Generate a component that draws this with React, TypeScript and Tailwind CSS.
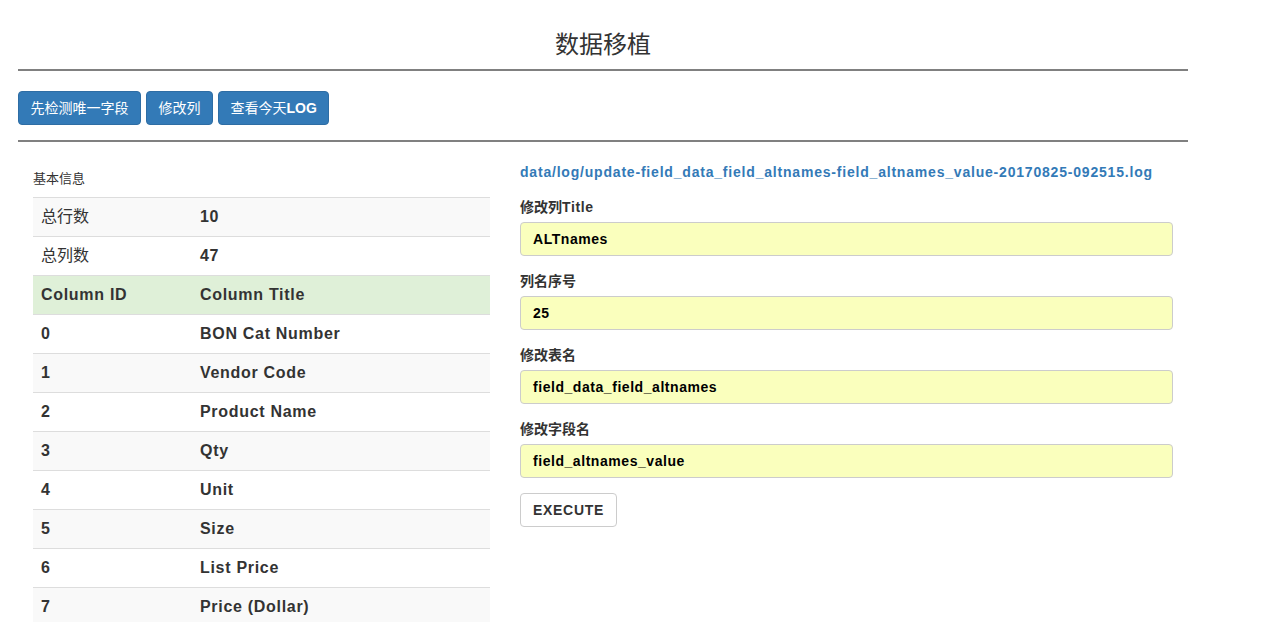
const font = {
  fontFamily: '"Liberation Sans", "Noto Sans CJK SC", Arial, sans-serif',
};

type Row = { id: string; title: string };

const columns: Row[] = [
  { id: "0", title: "BON Cat Number" },
  { id: "1", title: "Vendor Code" },
  { id: "2", title: "Product Name" },
  { id: "3", title: "Qty" },
  { id: "4", title: "Unit" },
  { id: "5", title: "Size" },
  { id: "6", title: "List Price" },
  { id: "7", title: "Price (Dollar)" },
];

const fields = [
  { label: "修改列", labelEn: "Title", value: "ALTnames" },
  { label: "列名序号", labelEn: "", value: "25" },
  { label: "修改表名", labelEn: "", value: "field_data_field_altnames" },
  { label: "修改字段名", labelEn: "", value: "field_altnames_value" },
];

export default function App() {
  return (
    <div
      className="h-[622px] w-[1266px] overflow-hidden bg-white text-[14px] text-[#333]"
      style={font}
    >
      <div className="ml-[18px] w-[1170px]">
        {/* Title */}
        <h1 className="mb-[7px] pt-[28px] text-center text-[24px] leading-[34px] text-[#333]">
          数据移植
        </h1>
        <div className="border-t-2 border-[#808080]" />

        {/* Toolbar */}
        <div className="mt-[20px] flex gap-[5px]">
          <button className="h-[34px] rounded-[4px] border border-[#2e6da4] bg-[#337ab7] px-[11.5px] text-[14px] text-white">
            先检测唯一字段
          </button>
          <button className="h-[34px] rounded-[4px] border border-[#2e6da4] bg-[#337ab7] px-[11.5px] text-[14px] text-white">
            修改列
          </button>
          <button className="h-[34px] rounded-[4px] border border-[#2e6da4] bg-[#337ab7] px-[11.5px] text-[14px] text-white">
            查看今天<span className="font-bold">LOG</span>
          </button>
        </div>
        <div className="mt-[15px] border-t-2 border-[#808080]" />

        <div className="flex">
          {/* Basic info table */}
          <div className="w-[487px] px-[15px] pt-[19px]">
            <div className="py-[8px] text-[13px] leading-[20px] text-[#333]">
              基本信息
            </div>
            <div className="w-[457px]">
              <div className="flex h-[39px] items-center border-t border-[#ddd] bg-[#f9f9f9] text-[16px]">
                <div className="w-[159px] px-[8px]">总行数</div>
                <div className="px-[8px] font-bold tracking-[0.7px]">10</div>
              </div>
              <div className="flex h-[39px] items-center border-t border-[#ddd] bg-white text-[16px]">
                <div className="w-[159px] px-[8px]">总列数</div>
                <div className="px-[8px] font-bold tracking-[0.7px]">47</div>
              </div>
              <div className="flex h-[39px] items-center border-t border-[#ddd] bg-[#dff0d8] text-[16px] font-bold tracking-[0.7px]">
                <div className="w-[159px] px-[8px]">Column ID</div>
                <div className="px-[8px]">Column Title</div>
              </div>
              {columns.map((row, i) => (
                <div
                  key={row.id}
                  className={`flex h-[39px] items-center border-t border-[#ddd] text-[16px] font-bold tracking-[0.7px] ${
                    i % 2 === 1 ? "bg-[#f9f9f9]" : "bg-white"
                  }`}
                >
                  <div className="w-[159px] px-[8px]">{row.id}</div>
                  <div className="px-[8px]">{row.title}</div>
                </div>
              ))}
            </div>
          </div>

          {/* Edit form */}
          <div className="w-[683px] px-[15px] pt-[20px]">
            <a className="block text-[14px] font-bold leading-[20px] tracking-[0.8px] text-[#337ab7]">
              data/log/update-field_data_field_altnames-field_altnames_value-20170825-092515.log
            </a>
            {fields.map((f) => (
              <div key={f.label} className="mt-[15px]">
                <div className="mb-[5px] text-[14px] font-bold leading-[20px]">
                  {f.label}
                  {f.labelEn && (
                    <span className="tracking-[0.6px]">{f.labelEn}</span>
                  )}
                </div>
                <div className="flex h-[34px] items-center rounded-[4px] border border-[#ccc] bg-[#faffbd] px-[12px] text-[14px] font-bold tracking-[0.55px] text-black">
                  {f.value}
                </div>
              </div>
            ))}
            <button className="mt-[15px] h-[34px] rounded-[4px] border border-[#ccc] bg-white px-[12px] text-[14px] font-bold tracking-[0.7px] text-[#333]">
              EXECUTE
            </button>
          </div>
        </div>
      </div>
    </div>
  );
}
